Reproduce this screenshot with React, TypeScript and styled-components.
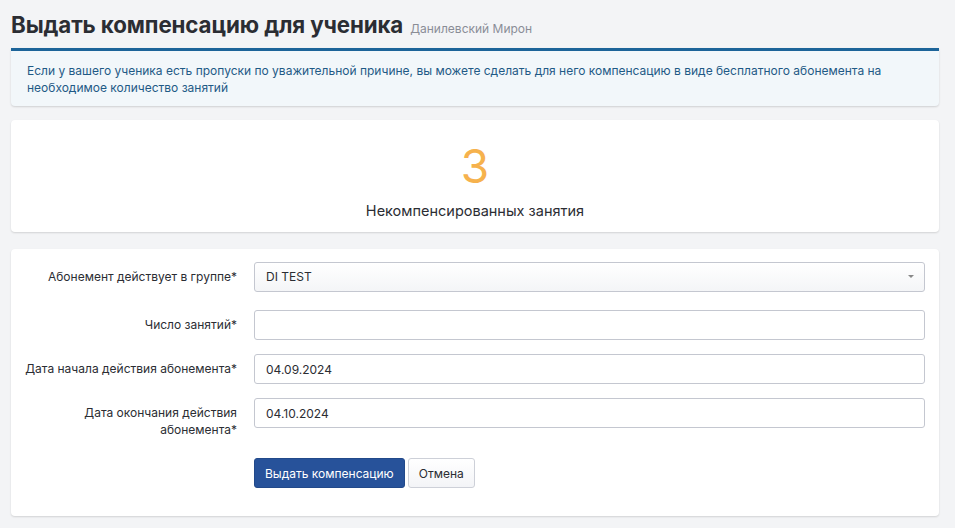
import React from 'react';
import styled, { createGlobalStyle } from 'styled-components';

const GlobalStyle = createGlobalStyle`
	* {
		box-sizing: border-box;
	}
	body {
		margin: 0;
		background: #f3f4f6;
		font-family: Inter, 'Liberation Sans', Arial, sans-serif;
		color: #2b2d33;
	}
`;

const Page = styled.div`
	padding: 10px 16px 12px 11px;
	display: flex;
	flex-direction: column;
`;

const Header = styled.div`
	display: flex;
	align-items: baseline;
	gap: 7px;
	height: 38px;
	padding-top: 1px;
`;

const Title = styled.h1`
	margin: 0;
	font-size: 22.3px;
	font-weight: 700;
	color: #2b2d33;
	line-height: 28px;
	letter-spacing: -0.1px;
`;

const Subtitle = styled.span`
	font-size: 12px;
	color: #8a8d96;
`;

const Alert = styled.div`
	background: #f2f7fa;
	border-top: 3px solid #1c6499;
	border-radius: 0 0 4px 4px;
	box-shadow: 0 1px 2px rgba(0, 0, 0, 0.15);
	padding: 11px 16px 10px 16px;
	font-size: 12px;
	line-height: 17px;
	color: #1f5a86;
	margin-bottom: 14px;
`;

const Card = styled.div<{ $pad: string }>`
	background: #fff;
	border-radius: 4px;
	box-shadow: 0 1px 2px rgba(0, 0, 0, 0.14);
	padding: ${({ $pad }) => $pad};
	margin-bottom: 17px;
`;

const Stat = styled.div`
	display: flex;
	flex-direction: column;
	align-items: center;
`;

const Count = styled.div`
	font-size: 46px;
	line-height: 48px;
	color: #f6b24d;
	font-weight: 400;
`;

const CountLabel = styled.div`
	font-size: 14.5px;
	color: #2b2d33;
	margin-top: 12px;
`;

const Form = styled.div`
	display: grid;
	grid-template-columns: 226px 1fr;
	column-gap: 17px;
	row-gap: 14px;
	align-items: start;
`;

const Label = styled.div`
	text-align: right;
	font-size: 12px;
	line-height: 17px;
	color: #2b2d33;
	padding: 6px 0 0 14px;
`;

const Field = styled.div`
	height: 30px;
	border: 1px solid #c4c7d0;
	border-radius: 3px;
	background: #fff;
	font-size: 12px;
	color: #2b2d33;
	display: flex;
	align-items: center;
	padding: 0 11px;
`;

const SelectField = styled(Field)`
	background: linear-gradient(#ffffff, #f4f5f7);
	justify-content: space-between;
	padding-bottom: 2px;
	margin-bottom: 4px;
`;

const Caret = styled.span`
	width: 0;
	height: 0;
	border-left: 3px solid transparent;
	border-right: 3px solid transparent;
	border-top: 3px solid #888;
	margin-right: -1px;
`;

const Actions = styled.div`
	grid-column: 2;
	display: flex;
	gap: 3px;
	margin-top: 6px;
`;

const Button = styled.button<{ $primary?: boolean }>`
	height: 30px;
	padding: 0 10px;
	font-family: inherit;
	font-size: 12px;
	border-radius: 3px;
	cursor: pointer;
	border: 1px solid ${({ $primary }) => ($primary ? '#22498a' : '#cdd0d8')};
	background: ${({ $primary }) => ($primary ? '#27529a' : 'linear-gradient(#ffffff, #f3f4f7)')};
	color: ${({ $primary }) => ($primary ? '#fff' : '#2b2d33')};
`;

const rows = [
	{ label: 'Число занятий*', value: '' },
	{ label: 'Дата начала действия абонемента*', value: '04.09.2024' },
	{ label: 'Дата окончания действия абонемента*', value: '04.10.2024' },
];

export default function App() {
	return (
		<>
			<GlobalStyle />
			<Page>
				<Header>
					<Title>Выдать компенсацию для ученика</Title>
					<Subtitle>Данилевский Мирон</Subtitle>
				</Header>
				<Alert>
					Если у вашего ученика есть пропуски по уважительной причине, вы можете сделать для него компенсацию в виде
					бесплатного абонемента на необходимое количество занятий
				</Alert>
				<Card $pad="22px 0 13px">
					<Stat>
						<Count>3</Count>
						<CountLabel>Некомпенсированных занятия</CountLabel>
					</Stat>
				</Card>
				<Card $pad="13px 14px 28px 0">
					<Form>
						<Label>Абонемент действует в группе*</Label>
						<SelectField>
							DI TEST
							<Caret />
						</SelectField>
						{rows.map((r) => (
							<React.Fragment key={r.label}>
								<Label>{r.label}</Label>
								<Field>{r.value}</Field>
							</React.Fragment>
						))}
						<Actions>
							<Button $primary>Выдать компенсацию</Button>
							<Button>Отмена</Button>
						</Actions>
					</Form>
				</Card>
			</Page>
		</>
	);
}
